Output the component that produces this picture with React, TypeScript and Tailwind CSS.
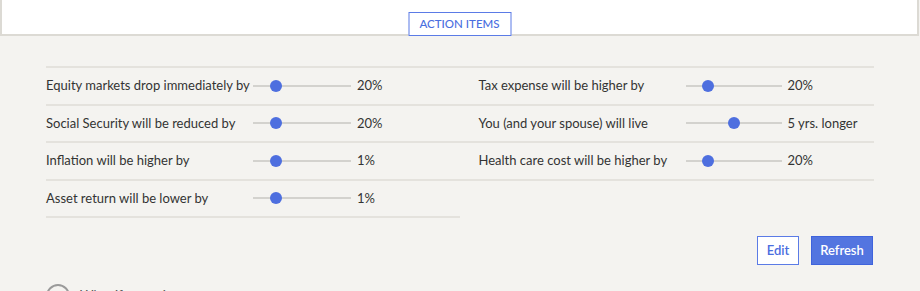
import React from "react";

type Row = { label: string; value: string; pos: number };

const left: Row[] = [
  { label: "Equity markets drop immediately by", value: "20%", pos: 23 },
  { label: "Social Security will be reduced by", value: "20%", pos: 23 },
  { label: "Inflation will be higher by", value: "1%", pos: 23 },
  { label: "Asset return will be lower by", value: "1%", pos: 23 },
];
const right: Row[] = [
  { label: "Tax expense will be higher by", value: "20%", pos: 23 },
  { label: "You (and your spouse) will live", value: "5 yrs. longer", pos: 50 },
  { label: "Health care cost will be higher by", value: "20%", pos: 23 },
];

function SliderRow({ row, trackW, padded }: { row: Row; trackW: number; padded?: boolean }) {
  return (
    <div
      className={
        padded
          ? "flex h-[37.5px] items-center border-b-2 border-[#e4e2dd] pl-[18.5px]"
          : "flex h-[37.5px] items-center border-b-2 border-[#e4e2dd]"
      }
    >
      <div className="w-[207px] shrink-0 text-[13px] text-[#333]">{row.label}</div>
      <div className="relative h-[12px] shrink-0" style={{ width: trackW }}>
        <div className="absolute left-0 right-0 top-[5px] h-[2px] bg-[#d3d2ce]" />
        <div
          className="absolute top-0 h-[12px] w-[12px] -translate-x-1/2 rounded-full bg-[#4e6fdf]"
          style={{ left: `${row.pos}%` }}
        />
      </div>
      <div className="ml-[6px] text-[13px] text-[#333]">{row.value}</div>
    </div>
  );
}

export default function App() {
  return (
    <div
      className="h-[291px] w-[920px] overflow-hidden bg-[#f4f3f0]"
      style={{ fontFamily: "Lato, 'Open Sans', sans-serif" }}
    >
      <div className="relative mr-[1px] h-[36px] border-x-2 border-b-2 border-[#dcdad4] bg-white">
        <button className="absolute left-1/2 top-[12px] flex h-[24px] w-[103px] -translate-x-1/2 items-center justify-center border border-[#5b7be6] bg-white text-[11.5px] font-medium text-[#4a6ee0]">
          ACTION ITEMS
        </button>
      </div>

      <div className="ml-[46px] mr-[46px] mt-[30px]">
        <div className="grid grid-cols-2 border-t-2 border-[#e4e2dd]">
          <div>
            {left.map((r) => (
              <SliderRow key={r.label} row={r} trackW={98} />
            ))}
          </div>
          <div>
            {right.map((r) => (
              <SliderRow key={r.label} row={r} trackW={96} padded />
            ))}
          </div>
        </div>
        <div className="mt-[18px] flex justify-end gap-[12px] pr-[1px]">
          <button className="h-[29px] w-[42px] border border-[#5b7be6] bg-white text-[13px] font-semibold text-[#4a6ee0]">
            Edit
          </button>
          <button className="h-[29px] w-[62px] border border-[#3f63dc] bg-[#5375e0] text-[13px] font-semibold text-white">
            Refresh
          </button>
        </div>
        <div className="mt-[19px] flex items-start gap-[10px]">
          <div className="h-[24px] w-[24px] rounded-full border-2 border-[#9a9a9a]" />
          <div className="pt-[2px] text-[13px] text-[#555]">What if scenarios</div>
        </div>
      </div>
    </div>
  );
}
